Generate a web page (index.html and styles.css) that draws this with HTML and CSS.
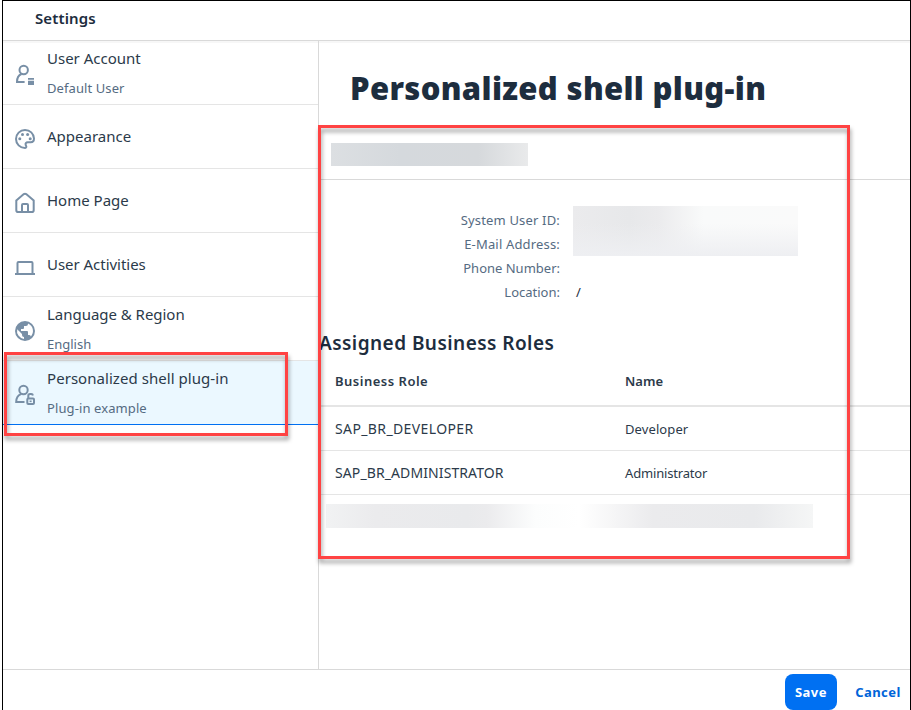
FILE: index.html
```html
<!DOCTYPE html>
<html lang="en">
<head>
<meta charset="utf-8">
<title>Settings</title>
<link rel="stylesheet" href="styles.css">
</head>
<body>
<div class="dialog">
  <header class="dialog-header"><span class="t-settings">Settings</span></header>
  <div class="dialog-body">
    <nav class="sidebar">
      <div class="item">
        <svg class="icon" viewBox="0 0 20 20"><circle cx="8.700" cy="5" r="4.200"/><path d="M6.500 9C3 10.200 2 12.500 2 17h7.600"/><path class="fill" d="M13 13h6v1.700h-6zM13 15.800h6v4.200h-6z"/></svg>
        <div class="texts"><span class="name t-account">User Account</span><span class="sub t-default">Default User</span></div>
      </div>
      <div class="item">
        <svg class="icon" viewBox="0 0 20 20"><path d="M10 1a9 9 0 1 0 0 18c2.200-.6 1.200-1.900.7-3-.6-1.500.4-2.700 2-2.700h3c2.500 0 3.300-1.600 3.300-3.800C18.700 4.500 15 1 10 1z"/><circle class="fill" cx="7.500" cy="5.400" r="1.500"/><circle class="fill" cx="12.600" cy="5.400" r="1.500"/><circle class="fill" cx="4.800" cy="9.700" r="1.500"/><circle class="fill" cx="15.200" cy="9.700" r="1.500"/></svg>
        <div class="texts"><span class="name t-appearance">Appearance</span></div>
      </div>
      <div class="item">
        <svg class="icon" viewBox="0 0 20 20"><path d="M1.300 7.500 8.800 1.100q1.200-.8 2.400 0l7.500 6.400v9.700q0 1.800-1.800 1.800H3.100q-1.800 0-1.800-1.800z"/><path d="M7 19v-7q0-1 1-1h4q1 0 1 1v7"/></svg>
        <div class="texts"><span class="name t-home">Home Page</span></div>
      </div>
      <div class="item">
        <svg class="icon" viewBox="0 0 20 20"><path d="M2.500 17V6q0-1 1-1h13q1 0 1 1v11"/><path d="M0 17h20"/></svg>
        <div class="texts"><span class="name t-activities">User Activities</span></div>
      </div>
      <div class="item">
        <svg class="icon" viewBox="0 0 20 20"><path class="fill" fill-rule="evenodd" d="M10 0a10 10 0 1 0 0 20 10 10 0 0 0 0-20zM9 17.900A8 8 0 0 1 2.200 8.200L7 13v1a2 2 0 0 0 2 2zM15.900 15.400A2 2 0 0 0 14 14h-1v-3a1 1 0 0 0-1-1H6V8h2a1 1 0 0 0 1-1V5h2a2 2 0 0 0 2-2v-.4a8 8 0 0 1 2.900 12.800z"/></svg>
        <div class="texts"><span class="name t-language">Language &amp; Region</span><span class="sub t-english">English</span></div>
      </div>
      <div class="item selected">
        <svg class="icon" viewBox="0 0 20 20"><circle cx="8.500" cy="5" r="4.200"/><path d="M6 9.100C2.500 10.300 1.200 12.500 1.200 17h8.300"/><rect x="12.300" y="13.500" width="6.700" height="5.500" rx="1"/><path d="M13.300 13.500v-2.800q0-1.700 1.700-1.700h1.200q1.500 0 1.700 1.500"/><path d="M15.600 15.500v1.600"/></svg>
        <div class="texts"><span class="name t-plugin">Personalized shell plug-in</span><span class="sub t-example">Plug-in example</span></div>
      </div>
    </nav>
    <main class="content">
      <h1><span class="t-title">Personalized shell plug-in</span></h1>
      <div class="user-bar"><div class="mask mask-user"></div></div>
      <section class="details">
        <div class="labels">
          <span class="t-system">System User ID:</span>
          <span class="t-email">E-Mail Address:</span>
          <span class="t-phone">Phone Number:</span>
          <span class="t-location">Location:</span>
        </div>
        <div class="values"><div class="mask mask-values"></div><span>/</span></div>
      </section>
      <h2><span class="t-roles">Assigned Business Roles</span></h2>
      <div class="table">
        <div class="row head"><div><span class="t-role">Business Role</span></div><div><span class="t-name">Name</span></div></div>
        <div class="row"><div><span class="t-dev">SAP_BR_DEVELOPER</span></div><div><span class="t-developer">Developer</span></div></div>
        <div class="row"><div><span class="t-admin">SAP_BR_ADMINISTRATOR</span></div><div><span class="t-administrator">Administrator</span></div></div>
      </div>
      <div class="mask mask-row"></div>
    </main>
  </div>
  <footer class="dialog-footer"><button class="save"><span class="t-save">Save</span></button><button class="cancel"><span class="t-cancel">Cancel</span></button></footer>
  <div class="callout callout-nav"></div>
  <div class="callout callout-content"></div>
</div>
</body>
</html>
```
FILE: styles.css
```css
* { box-sizing: border-box; }
body { margin: 0; background: #fff; color: #1d2d3e; font-family: "Noto Sans", "Open Sans", sans-serif; overflow: hidden; }
.dialog { position: relative; display: flex; flex-direction: column; height: 710px; margin-left: 2px; border: 1px solid #000; border-bottom: 0; }
.dialog-header { height: 40px; padding: 0 32px; border-bottom: 1px solid #d9d9d9; font-size: 15px; font-weight: 600; line-height: 35px; flex: none; }
.dialog-body { display: flex; height: 628px; box-shadow: inset 0 2px 1px #f7f7f7; }
.sidebar { width: 316px; border-right: 1px solid #d9d9d9; flex: none; }
.item { display: flex; align-items: center; height: 64px; padding-left: 12px; gap: 12px; border-bottom: 1px solid #e5e5e5; }
.item.selected { background: #ebf8ff; border-bottom-color: #0070f2; }
.icon { width: 20px; height: 20px; margin-top: 5px; fill: none; stroke: #788fa6; stroke-width: 2; flex: none; overflow: visible; }
.icon .fill { fill: #788fa6; stroke: none; }
.texts { display: flex; flex-direction: column; gap: 9px; white-space: nowrap; }
.name { font-size: 15px; line-height: 22px; margin-top: -2px; color: #2b3a4a; }
.sub { font-size: 13px; line-height: 20px; color: #556b82; }
.item .texts:has(.sub) { padding-top: 2px; }
.content { flex: 1; min-width: 0; white-space: nowrap; }
h1 { margin: 0; height: 97px; padding: 0 0 0 31px; font-size: 31px; font-weight: 900; line-height: 95px; letter-spacing: .34px; }
.user-bar { height: 42px; padding: 5px 0 0 12px; border-bottom: 1px solid #d9d9d9; }
.details { display: grid; grid-template-columns: 241px 1fr; gap: 13px; height: 142px; padding-top: 26px; font-size: 13px; line-height: 24px; color: #556b82; }
.labels { display: flex; flex-direction: column; align-items: flex-end; margin-top: 2px; }
.values { display: flex; flex-direction: column; color: #1d2d3e; }
.values span { padding: 24px 0 0 3px; }
h2 { margin: 0; height: 35px; font-size: 19px; font-weight: 600; line-height: 42px; }
.table { font-size: 13px; }
.row { display: grid; grid-template-columns: 290px 1fr; height: 44px; padding-left: 16px; border-bottom: 1px solid #e5e5e5; line-height: 44px; color: #2b3a4a; }
.row.head { height: 50px; border-bottom: 2px solid #e5e5e5; font-weight: 600; line-height: 49px; }
.t-settings { letter-spacing: .12px; }
.t-default { letter-spacing: .09px; }
.t-plugin { letter-spacing: .05px; }
.t-example { letter-spacing: .1px; }
.t-activities, .t-language { letter-spacing: -.03px; }
.t-system, .t-email { letter-spacing: .17px; }
.t-roles { letter-spacing: .45px; }
.t-role { letter-spacing: .5px; }
.t-dev { font-size: 14px; letter-spacing: .38px; }
.t-admin { font-size: 14px; letter-spacing: .1px; }
.t-developer { letter-spacing: .1px; }
.t-administrator { letter-spacing: -.17px; }
.t-cancel { letter-spacing: .45px; }
.t-save { letter-spacing: .5px; }
.mask-user { width: 197px; height: 23px; background: linear-gradient(90deg, #dcdfe2, #d5d9dd 35%, #d6d9dc 75%, #e9eaeb); }
.mask-values { width: 225px; height: 50px; background: linear-gradient(0deg, #eeeff2 0, transparent 65%), linear-gradient(90deg, #ebebed, #e7e8ea 25%, #ebebed 38%, #f9fafa 58%, #fafafa); }
.mask-row { width: 487px; height: 24px; margin: 9px 0 0 7px; background: linear-gradient(90deg, #f1f2f3, #ebebed 10%, #e9eaec 29%, #ebebed 33%, #fcfdfd 43%, #fff 52%, #ebebed 67%, #e9eaec 88%, #f5f6f6); }
.dialog-footer { display: flex; justify-content: flex-end; flex: none; height: 41px; padding-top: 4px; border-top: 1px solid #d9d9d9; }
.dialog-footer button { height: 36px; padding: 0; border: 0; border-radius: 8px; font: 700 13px "Noto Sans", sans-serif; }
.save { width: 52px; background: #0070f2; color: #fff; }
.dialog-footer .cancel { width: 64px; margin: 0 0 0 9px; background: none; color: #0064d9; }
.callout { position: absolute; border: 3px solid #ff4343; filter: drop-shadow(1px 4px 2px rgba(0,0,0,.38)); }
.callout-nav { left: 1px; top: 351px; width: 284px; height: 84px; }
.callout-content { left: 315px; top: 124px; width: 532px; height: 434px; }
```
